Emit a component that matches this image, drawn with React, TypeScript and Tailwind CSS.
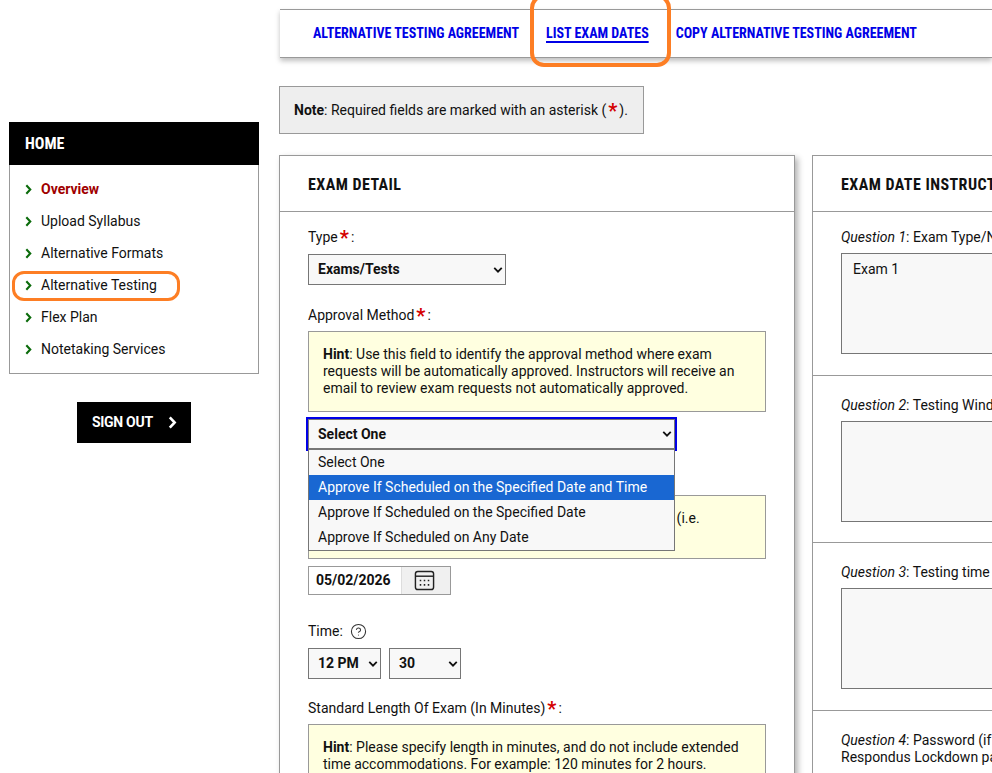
import { CircleHelp } from 'lucide-react';

const navItems = ['Overview', 'Upload Syllabus', 'Alternative Formats', 'Alternative Testing', 'Flex Plan', 'Notetaking Services'];
const tabs = ['ALTERNATIVE TESTING AGREEMENT', 'LIST EXAM DATES', 'COPY ALTERNATIVE TESTING AGREEMENT'];
const approvalOptions = [
  'Select One',
  'Approve If Scheduled on the Specified Date and Time',
  'Approve If Scheduled on the Specified Date',
  'Approve If Scheduled on Any Date',
];

function Required() {
  return <span className="text-[#d40000] font-bold text-[20px] leading-[0] align-[-3px] mx-[2px]">*</span>;
}

function Chevron({ className }: { className: string }) {
  return (
    <svg viewBox="0 0 8 12" className={className} fill="none" stroke="currentColor" strokeWidth="2.4">
      <path d="M1.5 1.2 6 6l-4.5 4.8" />
    </svg>
  );
}

function SelectBox({ value, className }: { value: string; className: string }) {
  return (
    <div className={`relative ${className}`}>
      <select
        defaultValue={value}
        className="appearance-none w-full h-full bg-[#f8f8f8] border border-[#767676] pl-[9px] font-bold text-[14px] text-[#111] outline-none"
      >
        <option>{value}</option>
      </select>
      <svg viewBox="0 0 12 8" className="absolute right-[3px] top-1/2 -translate-y-1/2 w-[10px] h-[7px] pointer-events-none" fill="none" stroke="#111" strokeWidth="2.2">
        <path d="M1.5 1.5 6 6l4.5-4.5" />
      </svg>
    </div>
  );
}

function Hint({ children, className }: { children: React.ReactNode; className?: string }) {
  return (
    <div className={`border border-[#999] bg-[#ffffe0] px-[14px] py-[14px] leading-[17px] text-[#111] ${className ?? ''}`}>
      {children}
    </div>
  );
}

function Question({ num, text, value, last, className }: { num: number; text: React.ReactNode; value?: string; last?: boolean; className: string }) {
  return (
    <div className={`border-b border-[#999] px-[28px] ${className}`}>
      <p className="leading-[17px] text-[#111]">
        <em>Question {num}</em>: {text}
      </p>
      {!last && (
        <div className="mt-[7px] h-[101px] border border-[#767676] bg-[#f8f8f8] px-[11px] py-[7px] leading-[17px] text-[#111]">
          {value}
        </div>
      )}
    </div>
  );
}

export default function App() {
  return (
    <div className="relative flex w-[992px] h-[773px] overflow-hidden bg-white text-[14px] font-['Roboto',sans-serif]">
      {/* Sidebar */}
      <aside className="w-[279px] shrink-0 pl-[9px] pr-[20px] pt-[122px]">
        <div className="bg-black h-[43px] flex items-center pl-[16px] text-white font-bold text-[16px] [font-stretch:75%]">HOME</div>
        <ul className="border border-t-0 border-[#999] h-[209px] pt-[8px]">
          {navItems.map((item, index) => (
            <li key={item} className="h-[32px] flex items-center pl-[15px] gap-[9px]">
              <Chevron className="w-[7px] h-[11px] text-[#0b6b0b]" />
              <span className={index === 0 ? 'font-bold text-[#a00000]' : 'text-[#111]'}>{item}</span>
            </li>
          ))}
        </ul>
        <div className="flex justify-center mt-[28px]">
          <button className="bg-black text-white font-bold text-[14px] tracking-[-0.3px] w-[114px] h-[41px] flex items-center pl-[15px] gap-[15px]">
            SIGN OUT
            <Chevron className="w-[9px] h-[13px]" />
          </button>
        </div>
      </aside>

      {/* Main */}
      <main className="flex-1 min-w-0 pt-[9px]">
        <nav className="ml-[1px] h-[49px] border-y border-[#999] shadow-[0_3px_5px_rgba(0,0,0,0.25)] flex items-center pl-[33px] gap-[27px] font-bold [font-stretch:75%] text-[#0000e6] bg-white">
          {tabs.map((tab, index) => (
            <a key={tab} className={index === 1 ? 'underline decoration-2 underline-offset-[3px]' : ''}>{tab}</a>
          ))}
        </nav>

        <div className="mt-[28px] border border-[#999] bg-[#eee] h-[48px] w-[365px] px-[14px] leading-[46px] text-[#111] whitespace-nowrap">
          <b>Note</b>: Required fields are marked with an asterisk (<Required />).
        </div>

        <div className="mt-[21px] flex gap-[17px] w-[1100px] items-start">
          {/* Exam detail */}
          <section className="w-[516px] h-[700px] border border-[#999] shadow-[3px_3px_6px_rgba(0,0,0,0.3)]">
            <h2 className="h-[56px] border-b border-[#999] pl-[28px] pt-[2px] flex items-center font-bold text-[16px] [font-stretch:75%] tracking-[0.45px] text-[#111]">EXAM DETAIL</h2>
            <div className="px-[28px] pt-[17px] text-[#111]">
              <div className="leading-[17px]">Type<Required />:</div>
              <SelectBox value="Exams/Tests" className="mt-[8px] w-[198px] h-[31px]" />

              <div className="mt-[22px] leading-[17px]">Approval Method<Required />:</div>
              <Hint className="mt-[7px]">
                <b>Hint</b>: Use this field to identify the approval method where exam requests will be automatically approved. Instructors will receive an email to review exam requests not automatically approved.
              </Hint>

              <div className="relative mt-[7px] w-[367px] h-[30px]">
                <SelectBox value="Select One" className="w-full h-full outline-2 outline-[#0000e6]" />
                <ul className="absolute z-10 left-0 top-[30px] w-full h-[102px] border border-[#767676] bg-[#f8f8f8] text-[14px]">
                  {approvalOptions.map((option, index) => (
                    <li key={option} className={`h-[25px] leading-[25px] pl-[9px] ${index === 1 ? 'bg-[#1967d2] text-white' : 'text-[#111]'}`}>{option}</li>
                  ))}
                </ul>
              </div>

              <Hint className="mt-[46px]">
                <b>Hint</b>: Use this field to specify the date an exam will be on (i.e.<br />the date in the syllabus).
              </Hint>

              <div className="mt-[7px] flex w-[143px] h-[29px] border border-[#999]">
                <span className="w-[92px] pl-[7px] leading-[27px] font-bold">05/02/2026</span>
                <span className="flex-1 bg-[#f0f0f0] border-l border-[#ddd] flex items-center justify-center pr-[3px]">
                  <svg viewBox="0 0 22 22" className="w-[21px] h-[21px]" fill="none" stroke="#222" strokeWidth="1.5">
                    <rect x="1.5" y="1.5" width="19" height="19" rx="2.5" />
                    <path d="M1.5 6.5h19" />
                    <path d="M6 11h1.6M10.2 11h1.6M14.4 11H16M6 15.5h1.6M10.2 15.5h1.6M14.4 15.5H16" strokeWidth="1.8" />
                  </svg>
                </span>
              </div>

              <div className="mt-[28px] leading-[17px] flex items-center gap-[7px]">
                Time:
                <CircleHelp className="w-[17px] h-[17px] text-[#333]" strokeWidth={1.5} />
              </div>
              <div className="mt-[8px] flex gap-[8px]">
                <SelectBox value="12 PM" className="w-[73px] h-[31px]" />
                <SelectBox value="30" className="w-[72px] h-[31px]" />
              </div>

              <div className="mt-[21px] leading-[17px]">Standard Length Of Exam (In Minutes)<Required />:</div>
              <Hint className="mt-[7px]">
                <b>Hint</b>: Please specify length in minutes, and do not include extended time accommodations. For example: 120 minutes for 2 hours.
              </Hint>
            </div>
          </section>

          {/* Exam date instructions */}
          <section className="w-[516px] h-[700px] border border-[#999]">
            <h2 className="h-[56px] border-b border-[#999] pl-[28px] pt-[2px] flex items-center font-bold text-[16px] [font-stretch:75%] tracking-[0.45px] text-[#111]">EXAM DATE INSTRUCTIONS</h2>
            <Question className="pt-[17px] pb-[21px]" num={1} text="Exam Type/Name" value="Exam 1" />
            <Question className="pt-[21px] pb-[20px]" num={2} text="Testing Window" />
            <Question className="pt-[21px] pb-[21px]" num={3} text="Testing time" />
            <Question className="pt-[21px] pb-[20px]" num={4} last text={<>Password (if applicable, including<br />Respondus Lockdown password)</>} />
          </section>
        </div>
      </main>

      {/* Orange annotations drawn on the screenshot */}
      <div className="absolute left-[530px] top-[-6px] w-[141px] h-[73px] border-[4px] border-[#fd7e24] rounded-[14px]" />
      <div className="absolute left-[12px] top-[271px] w-[168px] h-[30px] border-[3px] border-[#fd7e24] rounded-[12px]" />
    </div>
  );
}
